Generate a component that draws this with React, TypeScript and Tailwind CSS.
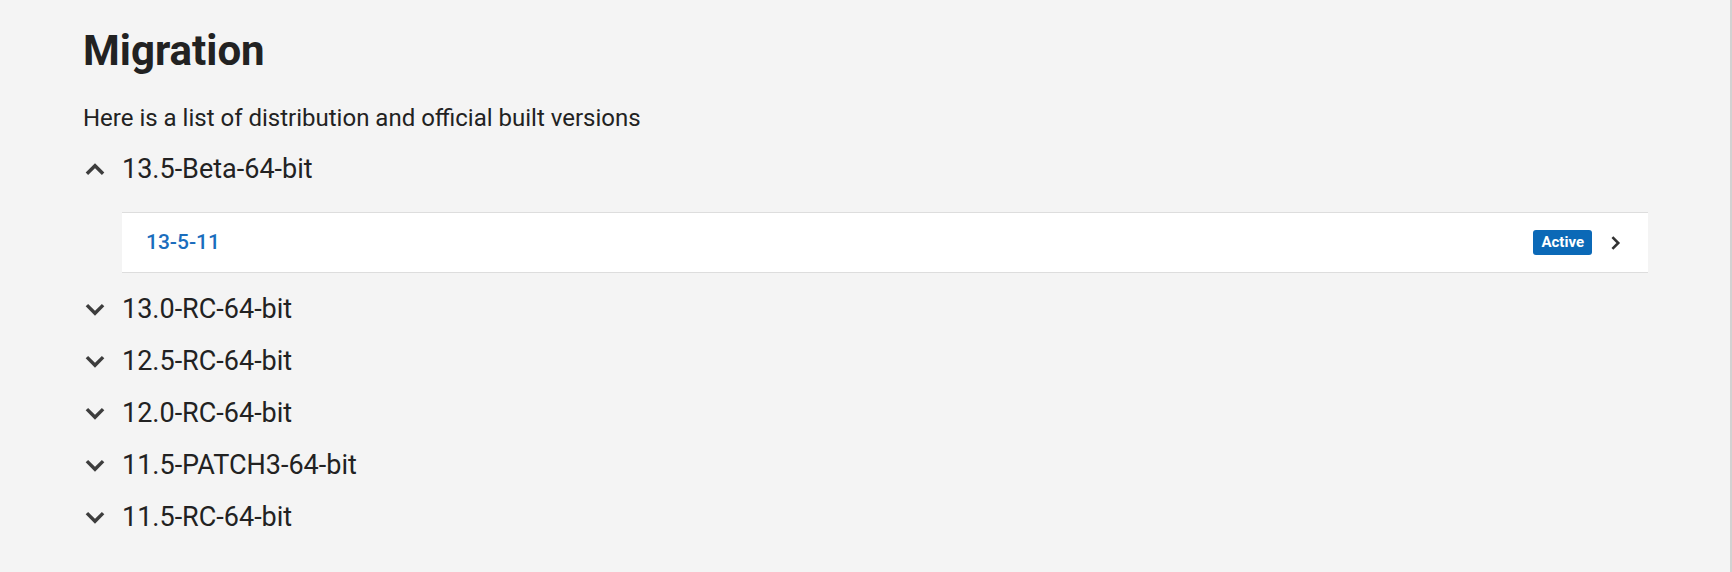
import React, { useState } from 'react';

// Version groups shown in the migration list
const versions: { name: string; builds: { id: string; active?: boolean }[] }[] = [
  { name: '13.5-Beta-64-bit', builds: [{ id: '13-5-11', active: true }] },
  { name: '13.0-RC-64-bit', builds: [] },
  { name: '12.5-RC-64-bit', builds: [] },
  { name: '12.0-RC-64-bit', builds: [] },
  { name: '11.5-PATCH3-64-bit', builds: [] },
  { name: '11.5-RC-64-bit', builds: [] },
];

// Chevron for the accordion header (up when open, down when closed)
const Chevron = ({ open }: { open: boolean }) => (
  <svg
    width="36"
    height="36"
    viewBox="0 0 24 24"
    className="-ml-[6px] shrink-0"
    fill="none"
    stroke="#3d3d3d"
    strokeWidth="2.3"
  >
    {open ? <path d="M6.6 15.2L12 9.8l5.4 5.4" /> : <path d="M6.6 9.4L12 14.8l5.4-5.4" />}
  </svg>
);

const ChevronRight = () => (
  <svg width="26" height="26" viewBox="0 0 24 24" fill="none" stroke="#333333" strokeWidth="2.4">
    <path d="M9.6 6.6l5.4 5.4-5.4 5.4" />
  </svg>
);

export default function App() {
  const [open, setOpen] = useState<string | null>('13.5-Beta-64-bit');

  return (
    <div className="min-h-[572px] w-full bg-[#f4f4f4] border-r-2 border-[#d2d2d2] font-['Roboto',sans-serif] text-[#222222]">
      <div className="pl-[83px] pr-[82px] pt-[26px]">
        <h1 className="text-[42px] leading-[50px] font-bold">Migration</h1>
        <p className="mt-[27px] text-[24px] leading-[30px]">
          Here is a list of distribution and official built versions
        </p>

        <ul className="mt-[10px]">
          {versions.map((v) => {
            const isOpen = open === v.name;
            return (
              <li key={v.name}>
                <button
                  type="button"
                  onClick={() => setOpen(isOpen ? null : v.name)}
                  className="flex h-[52px] items-center text-left"
                >
                  <span className="flex w-[39px] items-center">
                    <Chevron open={isOpen} />
                  </span>
                  <span className="text-[27px] leading-[52px]">{v.name}</span>
                </button>

                {isOpen && (
                  <div className="pl-[39px] pt-[17px] pb-[10px]">
                    {v.builds.map((b) => (
                      <div
                        key={b.id}
                        className="flex h-[61px] items-center justify-between border-y border-[#dddddd] bg-white pl-6 pr-[20px]"
                      >
                        <span className="text-[21px] font-medium text-[#1a6dbd]">{b.id}</span>
                        <div className="flex items-center gap-[10px]">
                          {b.active && (
                            <span className="rounded-[3px] bg-[#0b69b7] px-2 py-[3px] text-[15px] font-bold leading-[19px] text-white">
                              Active
                            </span>
                          )}
                          <ChevronRight />
                        </div>
                      </div>
                    ))}
                  </div>
                )}
              </li>
            );
          })}
        </ul>
      </div>
    </div>
  );
}
